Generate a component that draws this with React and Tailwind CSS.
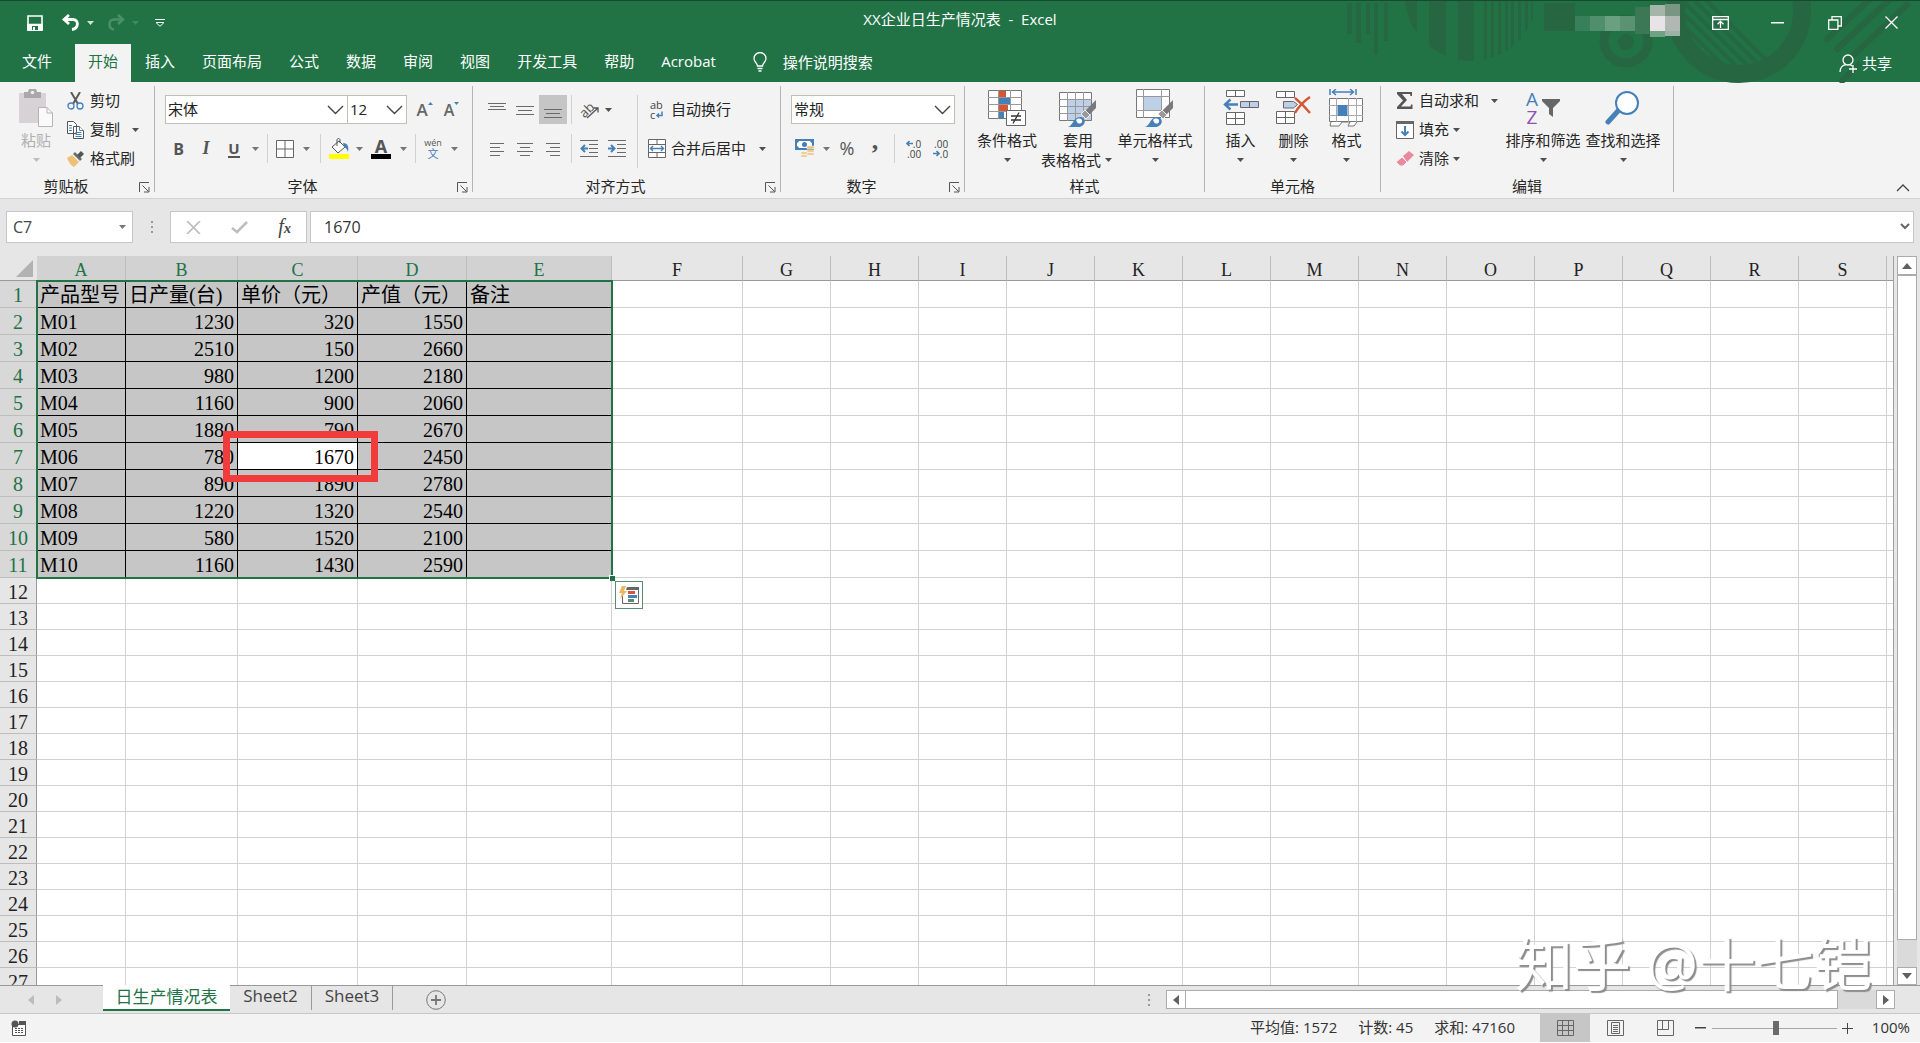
import React from 'react';

const products = [
  ['M01', 1230, 320, 1550],
  ['M02', 2510, 150, 2660],
  ['M03', 980, 1200, 2180],
  ['M04', 1160, 900, 2060],
  ['M05', 1880, 790, 2670],
  ['M06', 780, 1670, 2450],
  ['M07', 890, 1890, 2780],
  ['M08', 1220, 1320, 2540],
  ['M09', 580, 1520, 2100],
  ['M10', 1160, 1430, 2590]
];
const headings = ['产品型号', '日产量(台)', '单价（元）', '产值（元）', '备注'];
const columns = 'ABCDEFGHIJKLMNOPQRS'.split('');
const columnWidths = { A: 'w-[89px]', B: 'w-[112px]', C: 'w-[120px]', D: 'w-[109px]', E: 'w-[145px]', F: 'w-[131px]' };
const emptyRows = Array.from({ length: 16 }, (_, i) => i + 12);
const tabs = ['插入', '页面布局', '公式', '数据', '审阅', '视图', '开发工具', '帮助', 'Acrobat'];

const Caret = ({ className = 'w-[14px]' }) => (
  <span className={`flex shrink-0 justify-center ${className}`}>
    <svg width="7" height="4" viewBox="0 0 7 4"><path d="M0 0h7L3.5 4z" fill="currentColor" opacity=".8" /></svg>
  </span>
);

const Sep = () => (
  <span className="flex h-[29px] w-[11px] shrink-0 justify-center">
    <span className="w-px bg-[#d0d0d0]"></span>
  </span>
);

const Btn = ({ label, className = 'w-[28px]', children }) => (
  <button type="button" aria-label={label} className={`flex h-[29px] shrink-0 items-center justify-center ${className}`}>
    {children}
  </button>
);

const Lines = ({ rows }) => (
  <svg width="18" height="18" viewBox="0 0 18 18" stroke="#6a6a6a" strokeWidth="1">
    {rows.map(([x1, x2, y]) => <path key={y} d={`M${x1} ${y + 0.5}H${x2}`} />)}
  </svg>
);

const Group = ({ label, launcher, className, inner = '', children }) => (
  <section aria-label={label} className={`flex shrink-0 flex-col justify-between border-r border-[#b4b4b4] ${className}`}>
    <div className={`flex ${inner}`}>{children}</div>
    <div className={`relative flex h-3 items-center justify-center leading-3 ${launcher ? 'pr-[22px]' : ''}`}>
      {label}
      {launcher && (
        <button type="button" aria-label={`${label}设置`} className="absolute right-1 top-0.5">
          <svg width="11" height="11" viewBox="0 0 11 11" fill="none" stroke="#555">
            <path d="M.5 10V.5H10M3.5 3.5l6 6M10 5v5H5" />
          </svg>
        </button>
      )}
    </div>
  </section>
);

const BigButton = ({ label, label2, className, children }) => (
  <button type="button" className={`flex shrink-0 flex-col items-center whitespace-nowrap leading-5 ${className}`}>
    <span className="flex h-11 items-center">{children}</span>
    <span>{label}</span>
    <span className="flex h-5 items-center">
      {label2}
      <Caret />
    </span>
  </button>
);

const Picker = ({ label, value, className }) => (
  <div className={`relative h-[29px] shrink-0 ${className}`}>
    <select aria-label={label} className="h-full w-full appearance-none border border-[#c0c0b8] bg-white pl-0.5 text-[15px] text-[#222]">
      <option>{value}</option>
    </select>
    <svg className="pointer-events-none absolute right-1 top-2.5" width="17" height="10" viewBox="0 0 17 10" fill="none" stroke="#444" strokeWidth="1.4">
      <path d="M1 1l7.5 7.5L16 1" />
    </svg>
  </div>
);

const Brush = () => (
  <g>
    <path d="M37 11v8l-7 7-4-4z" fill="#7a7a7a" />
    <path d="M26 21l5 5-4 4-5-5z" fill="#9a9a9a" stroke="#f1f1f1" />
    <path d="M9 38c5-1 5-10 12-10 4 0 6 4 4 7-3 4-11 5-16 3z" fill="#4680b8" />
    <path d="M17 31c3-3 7-1 6 2-1 2-4 2-5 0z" fill="#fff" />
  </g>
);

const TitleArt = () => (
  <svg className="pointer-events-none absolute right-0 top-0" width="580" height="82" viewBox="0 0 580 82">
    <defs>
      <clipPath id="disc"><circle cx="131" cy="-6" r="66" /></clipPath>
      <clipPath id="inner"><circle cx="399" cy="10" r="62" /></clipPath>
    </defs>
    <g fill="#266640">
      <path d="M7 2h5v31H7zM16 2h5v40h-5zM26 2h4v31h-4zM34 2h4v52h-4zM44 2h4v38h-4z" />
      <g clipPath="url(#disc)">
        <path d="M64 0h13v40H64zM89 0h17v60H89zM118 0h16v62h-16zM144 0h3v62h-3zM151 0h3v62h-3zM158 0h3v62h-3zM165 0h3v62h-3zM171 0h3v50h-3zM178 0h3v50h-3zM185 0h3v50h-3zM191 0h2v50h-2z" />
      </g>
      <circle cx="286" cy="41" r="8" />
      <path d="M204 2h31v28h-31z" />
    </g>
    <g fill="none" stroke="#266640">
      <circle cx="286" cy="40" r="22" strokeWidth="9" />
      <circle cx="399" cy="10" r="63" strokeWidth="18" />
      <g clipPath="url(#inner)" strokeWidth="4">
        <path d="M350-5l80 80M362-5l80 80M338-5l80 80M326-5l80 80M314-5l80 80" />
      </g>
      <path d="M485 40l45-42M495 50l55-52M505 62l64-60M500 82l20-20" strokeWidth="6" />
    </g>
    <g>
      <path d="M235 15h15v15h-15z" fill="#37805a" />
      <path d="M250 15h15v15h-15z" fill="#4f8f6b" />
      <path d="M265 15h15v15h-15z" fill="#6a9f80" />
      <path d="M280 15h15v15h-15z" fill="#5b9272" />
      <path d="M295 6h15v27h-15z" fill="#3c7853" />
      <path d="M310 4h15v11h-15z" fill="#a5b5a9" />
      <path d="M325 3h15v12h-15z" fill="#789682" />
      <path d="M310 15h15v15h-15z" fill="#e7e3e6" />
      <path d="M325 15h15v15h-15z" fill="#b0b8b4" />
      <path d="M310 30h15v6h-15z" fill="#70a184" />
      <path d="M325 30h15v5h-15z" fill="#9db1a4" />
    </g>
  </svg>
);

const TitleBar = () => (
  <header className="relative shrink-0 border-t border-[#17492e] bg-[#217346] text-white">
    <TitleArt />
    <div className="relative grid h-[43px] grid-cols-[1fr_auto_1fr] items-center">
      <div className="flex items-center pl-[27px]">
        <button type="button" aria-label="保存">
          <svg width="16" height="16" viewBox="0 0 16 16" fill="none" stroke="#fff" strokeWidth="1.6">
            <path d="M1 1h14v14H1z" /><path d="M1 9.5h14V15H1z" fill="#fff" /><path d="M5 11h6v4H5z" fill="#217346" stroke="none" /><path d="M6 12h2v3H6z" fill="#fff" stroke="none" />
          </svg>
        </button>
        <button type="button" aria-label="撤消" className="ml-[19px] flex items-center">
          <svg width="18" height="17" viewBox="0 0 18 17" fill="none" stroke="#fff" strokeWidth="2.8">
            <path d="M7 1L2 5.5 7 10M2.5 5.5H11c6 0 6 9-1 10" />
          </svg>
          <Caret className="w-[20px]" />
        </button>
        <button type="button" aria-label="恢复" className="ml-[7px] flex items-center text-[#4b9068]">
          <svg width="18" height="17" viewBox="0 0 18 17" fill="none" stroke="currentColor" strokeWidth="2.5">
            <path d="M11 1l5 4.5-5 4.5M15.5 5.5H7c-6 0-6 9 0 10" />
          </svg>
          <Caret className="w-[20px]" />
        </button>
        <button type="button" aria-label="自定义快速访问工具栏" className="ml-[10px]">
          <svg width="10" height="8" viewBox="0 0 10 8" fill="none" stroke="#fff"><path d="M0 .5h10M1 3.5h8L5 7.3z" /></svg>
        </button>
      </div>
      <h1 className="whitespace-pre pb-1.5 text-[15px]">XX企业日生产情况表  -  Excel</h1>
      <div className="flex justify-end">
        <button type="button" aria-label="功能区显示选项" className="flex w-[57px] justify-center">
          <svg width="17" height="14" viewBox="0 0 17 14" fill="none" stroke="#fff" strokeWidth="1.3"><path d="M.7.7h15.6v12.6H.7zM.7 3.5h15.6M8.5 12V5.5M5.5 8.3l3-3 3 3" /></svg>
        </button>
        <button type="button" aria-label="最小化" className="flex w-[57px] items-center justify-center">
          <svg width="13" height="2" viewBox="0 0 13 2"><path d="M0 0h13v1.5H0z" fill="#fff" /></svg>
        </button>
        <button type="button" aria-label="还原" className="flex w-[57px] justify-center">
          <svg width="14" height="14" viewBox="0 0 14 14" fill="none" stroke="#fff" strokeWidth="1.3"><path d="M.7 4h9.2v9.3H.7zM4 4V.7h9.3V10H10" /></svg>
        </button>
        <button type="button" aria-label="关闭" className="flex w-[57px] justify-center">
          <svg width="13" height="13" viewBox="0 0 13 13" stroke="#fff" strokeWidth="1.3"><path d="M.5.5l12 12M12.5.5l-12 12" /></svg>
        </button>
      </div>
    </div>
    <nav className="relative flex h-[38px] items-stretch gap-px pl-[9px] text-[15px]">
      <button type="button" className="px-[13px] pb-1">文件</button>
      <button type="button" className="ml-[9px] bg-[#f3f3f3] px-[13px] pb-1 text-[#217346]">开始</button>
      {tabs.map((tab) => (
        <button key={tab} type="button" className="px-[13px] pb-1">{tab}</button>
      ))}
      <button type="button" className="ml-[23px] flex items-center gap-4 pb-0.5">
        <svg width="14" height="20" viewBox="0 0 14 20" fill="none" stroke="#fff" strokeWidth="1.3">
          <path d="M4.5 14c0-3-3.5-4-3.5-7.5a6 6 0 0112 0C13 10 9.500 11 9.500 14zM4.500 16.500h5M5.500 19h3" />
        </svg>
        操作说明搜索
      </button>
      <button type="button" className="ml-auto mr-[28px] flex items-center gap-1">
        <svg width="19" height="19" viewBox="0 0 19 19" fill="none" stroke="#fff" strokeWidth="1.3">
          <circle cx="9" cy="6" r="5" /><path d="M1 18c0-4 2.5-7 6-7.5M11 10.5l2 1.5M14 11v8M10 15h8" />
        </svg>
        共享
      </button>
    </nav>
  </header>
);

const Clipboard = () => (
  <Group label="剪贴板" launcher className="w-[155px]">
    <div className="text-[#b0b0b0]">
      <BigButton label="粘贴" className="ml-[9px] w-[54px]">
        <svg width="34" height="38" viewBox="0 0 34 38">
          <path d="M0 4h27v30H0z" fill="#d6d2d6" /><path d="M5 3h4a4.500 4.500 0 019 0h4v6H5z" fill="#a9a9a9" /><circle cx="13.5" cy="3.5" r="1.7" fill="#f3f3f3" />
          <path d="M19.5 18.5h8.5l5.5 5.5v13.5h-14z" fill="#fafafa" stroke="#b5b5b5" /><path d="M28 18.5V24h5.5" fill="none" stroke="#b5b5b5" />
        </svg>
      </BigButton>
    </div>
    <div className="flex flex-col">
      <button type="button" className="flex h-[29px] items-center gap-[6px] pl-1">
        <svg width="17" height="18" viewBox="0 0 17 18" fill="none">
          <path d="M4 0l7 12M13 0L6 12" stroke="#5a5a5a" strokeWidth="2" /><circle cx="4" cy="14" r="3" stroke="#4680b8" strokeWidth="1.3" /><circle cx="13" cy="14" r="3" stroke="#4680b8" strokeWidth="1.3" />
        </svg>
        剪切
      </button>
      <button type="button" className="flex h-[29px] items-center gap-[6px] pl-1">
        <svg width="17" height="18" viewBox="0 0 17 18" fill="#fff" stroke="#555">
          <path d="M.5.5h6l3 3v9h-9zM6.500 5.500h6l4 4v8h-10z" /><path d="M2 4.500h3M2 7h3M2 9.500h3M12.500 5.500v4h4M8.500 11.500h6M8.500 13.500h6M8.500 15.500h6" stroke="#4680b8" />
        </svg>
        复制
        <Caret className="ml-0.5 w-[14px]" />
      </button>
      <button type="button" className="flex h-[29px] items-center gap-[6px] pl-1">
        <svg width="17" height="16" viewBox="0 0 17 16">
          <path d="M0 7l5-3 7 7-5 5c-2-1-4-2-7-9z" fill="#edc274" /><path d="M6 3l2-2 7 7-2 2z" fill="#6d6d6d" /><path d="M10 4l4-4 3 3-4 4z" fill="#555" />
        </svg>
        格式刷
      </button>
    </div>
  </Group>
);

const FontGroup = () => (
  <Group label="字体" launcher className="w-[318px]" inner="pl-[10px]">
    <div className="flex flex-col gap-[10px] pt-[9px]">
      <div className="flex">
        <Picker label="字体" value="宋体" className="w-[183px]" />
        <Picker label="字号" value="12" className="-ml-px w-[60px]" />
        <Btn label="增大字号" className="ml-1 w-[27px]"><span className="text-[17px] font-semibold text-[#666]">A</span><svg className="mb-3" width="5" height="3"><path d="M0 3h5L2.5 0z" fill="#4680b8" /></svg></Btn>
        <Btn label="减小字号" className="w-[27px]"><span className="text-[16px] font-semibold text-[#666]">A</span><svg className="mb-3" width="5" height="3"><path d="M0 0h5L2.5 3z" fill="#4680b8" /></svg></Btn>
      </div>
      <div className="flex items-center text-[#555]">
        <Btn label="加粗" className="w-[27px]"><b className="text-[16px]">B</b></Btn>
        <Btn label="倾斜"><b className="font-['Liberation_Serif',serif] text-[18px] italic">I</b></Btn>
        <Btn label="下划线"><b className="border-b-2 border-[#555] text-[15px] leading-4">U</b></Btn>
        <Caret />
        <Sep />
        <Btn label="边框" className="w-6">
          <svg width="18" height="18" viewBox="0 0 18 18" fill="#fff" stroke="#666"><path d="M.5.5h17v17H.5zM9 .5v17M.5 9h17" /></svg>
        </Btn>
        <Caret className="w-[18px]" />
        <Sep />
        <Btn label="填充颜色" className="w-[26px]">
          <svg width="20" height="21" viewBox="0 0 20 21">
            <path d="M3 9l7-6 6 6-7 6z" fill="#fff" stroke="#555" /><path d="M8 8V2c0-2 3-2 3 0v3" fill="none" stroke="#555" /><path d="M14 5c5 0 6 4 5 9-1-3-2-4-4-5z" fill="#4680b8" /><path d="M0 16h20v5H0z" fill="#ff0" />
          </svg>
        </Btn>
        <Caret />
        <Btn label="字体颜色" className="w-[30px]">
          <span className="flex flex-col items-center"><b className="text-[18px] leading-4">A</b><span className="h-[5px] w-5 bg-black"></span></span>
        </Btn>
        <Caret />
        <Sep />
        <Btn label="拼音指南" className="w-6">
          <span className="flex flex-col items-center"><span className="text-[9px] leading-[10px]">wén</span><span className="text-[11px] leading-3 text-[#4680b8]">文</span></span>
        </Btn>
        <Caret className="w-[18px]" />
      </div>
    </div>
  </Group>
);

const Indent = ({ label, out }) => (
  <Btn label={label}>
    <svg width="18" height="17" viewBox="0 0 18 17" fill="none" stroke="#6a6a6a">
      <path d="M0 .5h18M9 4.500h9M9 8.500h9M9 12.500h9M0 16.500h18" />
      <path d={out ? 'M8 8.500H2M5 5L1.500 8.500 5 12' : 'M0 8.500h6M3 5l3.500 3.500L3 12'} stroke="#4680b8" strokeWidth="2" />
    </svg>
  </Btn>
);

const AlignGroup = () => (
  <Group label="对齐方式" launcher className="w-[308px]" inner="pl-[10px]">
    <div className="flex flex-col gap-[10px] pt-[9px]">
      <div className="flex items-center">
        <Btn label="顶端对齐"><Lines rows={[[0, 18, 2], [2, 16, 5], [0, 18, 8]]} /></Btn>
        <Btn label="垂直居中"><Lines rows={[[0, 18, 5], [2, 16, 9], [0, 18, 13]]} /></Btn>
        <Btn label="底端对齐" className="w-[28px] bg-[#c5c5c5]"><Lines rows={[[0, 18, 8], [2, 16, 12], [0, 18, 16]]} /></Btn>
        <span className="flex h-[29px] w-2 shrink-0 justify-center"><span className="w-px bg-[#d0d0d0]"></span></span>
        <Btn label="方向">
          <svg className="overflow-visible" width="19" height="18" viewBox="0 0 19 18">
            <text x="-1" y="14" fontSize="13" fill="#555" transform="rotate(-45 6 9)">ab</text>
            <path d="M7 17L18 7M13.5 7H18v4.5" fill="none" stroke="#555" strokeWidth="1.3" />
          </svg>
        </Btn>
        <Caret className="w-[10px]" />
      </div>
      <div className="flex items-center">
        <Btn label="左对齐"><Lines rows={[[2, 16, 3], [2, 12, 7], [2, 16, 11], [2, 12, 15]]} /></Btn>
        <Btn label="居中"><Lines rows={[[1, 17, 3], [4, 14, 7], [1, 17, 11], [4, 14, 15]]} /></Btn>
        <Btn label="右对齐"><Lines rows={[[2, 16, 3], [6, 16, 7], [2, 16, 11], [6, 16, 15]]} /></Btn>
        <span className="flex h-[29px] w-2 shrink-0 justify-center"><span className="w-px bg-[#d0d0d0]"></span></span>
        <Indent label="减少缩进量" out />
        <Indent label="增加缩进量" />
      </div>
    </div>
    <span className="ml-[6px] mt-[9px] h-[73px] w-px bg-[#d0d0d0]"></span>
    <div className="flex flex-col gap-[10px] pl-[10px] pt-[9px]">
      <button type="button" className="flex h-[29px] items-center gap-[5px]">
        <span className="flex w-[18px] flex-col items-start pl-0.5 text-[11px] leading-[10px] text-[#444]">
          <span>ab</span>
          <span className="flex">c<svg width="8" height="9" viewBox="0 0 8 8" fill="none" stroke="#4680b8" strokeWidth="1.5"><path d="M7 1v4H2M4 3L2 5l2 2" /></svg></span>
        </span>
        自动换行
      </button>
      <button type="button" className="flex h-[29px] items-center gap-[5px]">
        <svg width="18" height="19" viewBox="0 0 18 19" fill="#fff" stroke="#666">
          <path d="M.5.5h17v18H.5zM.5 5.500h17M.5 13.500h17M9 .5v5M9 13.500v5" /><path d="M3 9.500h12M5 7L2.500 9.500 5 12M13 7l2.500 2.500L13 12" fill="none" stroke="#4680b8" strokeWidth="1.4" />
        </svg>
        合并后居中
        <Caret className="ml-1 w-[14px]" />
      </button>
    </div>
  </Group>
);

const Arrow = ({ right }) => (
  <svg width="7" height="7" viewBox="0 0 7 7" fill="none" stroke="#4680b8" strokeWidth="1.6">
    <path d={right ? 'M0 3.500h6M3.500 1L6 3.500 3.500 6' : 'M7 3.500H1M3.500 1L1 3.500 3.500 6'} />
  </svg>
);

const Decimal = ({ label, top, bottom, flip }) => (
  <Btn label={label} className="w-[27px]">
    <span className="flex flex-col items-end text-[10px] leading-[10px] text-[#444]">
      <span className="flex items-center">{!flip && <Arrow />}{top}</span>
      <span className="flex items-center">{flip && <Arrow right />}{bottom}</span>
    </span>
  </Btn>
);

const NumberGroup = () => (
  <Group label="数字" launcher className="w-[184px]" inner="pl-[10px]">
    <div className="flex flex-col gap-[10px] pt-[9px]">
      <Picker label="数字格式" value="常规" className="w-[164px]" />
      <div className="flex items-center text-[#555]">
        <Btn label="会计数字格式">
          <svg width="20" height="20" viewBox="0 0 20 20">
            <path d="M0 0h19v11H0z" fill="#4680b8" /><path d="M2 4a3 3 0 002-2h11a3 3 0 002 2v3a3 3 0 00-2 2H4a3 3 0 00-2-2z" fill="#fff" /><circle cx="9.5" cy="5.5" r="2.5" fill="#4680b8" />
            <path d="M12 7h7v3h-7zM12 11h7v2h-7zM12 14h7v2h-7zM6 13h6v2H6zM6 16h6v2H6z" fill="#edc274" stroke="#f3f3f3" strokeWidth=".5" />
          </svg>
        </Btn>
        <Caret />
        <Btn label="百分比样式"><span className="text-[18px]">%</span></Btn>
        <Btn label="千位分隔样式"><b className="pb-4 font-['Liberation_Serif',serif] text-[26px] leading-5">,</b></Btn>
        <Sep />
        <Decimal label="增加小数位数" top=".0" bottom=".00" />
        <Decimal label="减少小数位数" top=".00" bottom=".0" flip />
      </div>
    </div>
  </Group>
);

const StyleGroup = () => (
  <Group label="样式" className="w-[240px]" inner="gap-px pl-[10px]">
    <BigButton label="条件格式" className="w-16">
      <svg width="38" height="36" viewBox="0 0 38 36">
        <path d="M.5.5h33v28H.5z" fill="#fff" stroke="#777" /><path d="M0 7.500h34M0 14.500h34M0 21.500h34M10.500 0v29M22.500 0v29" stroke="#999" />
        <path d="M11 1h7v6h-7zM11 15h9v6h-9z" fill="#d65532" /><path d="M11 8h11v6H11zM11 22h5v6h-5z" fill="#4680b8" />
        <path d="M18.5 20.5h19v15h-19z" fill="#fff" stroke="#666" /><path d="M23 26h10M23 30h10M31 22.500l-6 11" stroke="#333" strokeWidth="1.3" />
      </svg>
    </BigButton>
    <BigButton label="套用" label2="表格格式" className="w-[76px]">
      <svg width="38" height="38" viewBox="0 0 38 38">
        <path d="M.5 3.500h32v28H.5z" fill="#fff" stroke="#777" /><path d="M9 10h23v21H9z" fill="#bdd0e8" /><path d="M0 10.500h33M0 17.500h33M0 24.500h33M8.500 3v29M16.500 3v29M24.500 3v29" stroke="#999" />
        <Brush />
      </svg>
    </BigButton>
    <BigButton label="单元格样式" className="w-[76px]">
      <svg width="38" height="38" viewBox="0 0 38 38">
        <path d="M.5.5h33v28H.5z" fill="#fff" stroke="#777" /><path d="M8 8h18v13H8z" fill="#bdd0e8" /><path d="M0 7.500h34M0 21.500h34M7.500 0v29M25.500 0v29" stroke="#999" />
        <Brush />
      </svg>
    </BigButton>
  </Group>
);

const CellGroup = () => (
  <Group label="单元格" className="w-[176px]" inner="pl-[9px]">
    <BigButton label="插入" className="w-[53px]">
      <svg width="36" height="36" viewBox="0 0 36 36" fill="#fff" stroke="#666">
        <path d="M3.500.5h18v6h-18zM12.500.5v6M3.500 22.500h18v12h-18zM3.500 28.500h18M12.500 22.500v12" /><path d="M17.500 11.500h18v6h-18zM26.500 11.500v6" fill="#bdd0e8" />
        <path d="M15 14.500H2M7.500 9.500l-5.500 5 5.500 5" fill="none" stroke="#4680b8" strokeWidth="2.4" />
      </svg>
    </BigButton>
    <BigButton label="删除" className="w-[53px]">
      <svg width="36" height="36" viewBox="0 0 36 36" fill="#fff" stroke="#666">
        <path d="M.5 1.500h18v6H.5zM9.500 1.500v6M.5 21.500h18v12H.5zM.5 27.500h18M9.500 21.500v12" /><path d="M7.500 11.500h10l4 3-4 3.500h-10z" fill="#bdd0e8" />
        <path d="M19 8c5 4 10 9 15 15M34 7c-6 4-11 9-15 16" fill="none" stroke="#d65532" strokeWidth="2.4" />
      </svg>
    </BigButton>
    <BigButton label="格式" className="w-[53px]">
      <svg width="35" height="38" viewBox="0 0 35 38" fill="#fff" stroke="#777">
        <path d="M.5 9.500h33v23H.5zM2 33l-1 4h9l3-4h8l-2 4h6l3-4" /><path d="M0 16.500h34M0 26.500h34M7.500 9v24M19.500 9v24M27.500 9v24" stroke="#aaa" />
        <path d="M8.500 16h10v11h-10z" fill="#4680b8" stroke="none" /><path d="M1 0v6M27 0v6M4 3h20M7 0L3.500 3 7 6M21 0l3.500 3L21 6" fill="none" stroke="#4680b8" strokeWidth="1.5" />
      </svg>
    </BigButton>
  </Group>
);

const EditGroup = () => (
  <Group label="编辑" className="w-[293px]" inner="pl-[14px]">
    <div className="flex w-[110px] flex-col">
      <button type="button" className="flex h-[29px] items-center">
        <svg className="mr-1 w-5" width="16" height="17" viewBox="0 0 16 17"><path d="M0 0h15v4h-1.5L13 2H5l5 6-6 6.500h9.500l.5-2h1.500V17H0v-2l6-6.500L0 2z" fill="#555" /></svg>
        自动求和
        <Caret className="ml-2 w-[14px]" />
      </button>
      <button type="button" className="flex h-[29px] items-center">
        <svg className="mr-1 w-5" width="18" height="18" viewBox="0 0 18 18" fill="#fff"><path d="M.5.5h17v17H.5z" stroke="#666" /><path d="M0 0h18v3H0z" fill="#666" /><path d="M9 5v9M5.500 10.500L9 14l3.500-3.500" fill="none" stroke="#4680b8" strokeWidth="2" /></svg>
        填充
        <Caret />
      </button>
      <button type="button" className="flex h-[29px] items-center">
        <svg className="mr-1 w-5" width="18" height="16" viewBox="0 0 18 16"><path d="M7 5l6-5 5 4-7 7z" fill="#e8899c" /><path d="M6 6l5 5-4 4H4l-4-4z" fill="#e8899c" stroke="#f3f3f3" /></svg>
        清除
        <Caret />
      </button>
    </div>
    <div className="flex gap-1">
      <BigButton label="排序和筛选" className="w-[76px]">
        <span className="flex items-center">
          <span className="flex flex-col text-[19px] leading-[18px]"><span className="text-[#4680b8]">A</span><span className="text-[#8b54b0]">Z</span></span>
          <svg className="ml-1" width="18" height="18" viewBox="0 0 18 18"><path d="M0 0h18v2l-7 7v9l-4-3V9L0 2z" fill="#666" /></svg>
        </span>
      </BigButton>
      <BigButton label="查找和选择" className="w-[76px]">
        <svg width="36" height="34" viewBox="0 0 36 34" fill="none" stroke="#4680b8"><path d="M13 20L3 31" strokeWidth="5" strokeLinecap="round" /><circle cx="22" cy="12" r="11" fill="#fdfeff" strokeWidth="2" /></svg>
      </BigButton>
    </div>
  </Group>
);

const FormulaBar = () => (
  <div className="flex h-[57px] shrink-0 items-start px-[6px] pt-3">
    <div className="relative h-8 w-[127px]">
      <input aria-label="名称框" defaultValue="C7" className="h-full w-full border border-[#c6c6c6] bg-white pl-[6px] text-[16px] text-[#444]" />
      <span className="pointer-events-none absolute right-1 top-3.5 text-[#555]"><Caret /></span>
    </div>
    <div className="flex h-8 w-[37px] flex-col items-center justify-center gap-[3px]">
      <span className="size-0.5 bg-[#999]"></span><span className="size-0.5 bg-[#999]"></span><span className="size-0.5 bg-[#999]"></span>
    </div>
    <div className="flex h-8 w-[137px] items-center justify-around border border-[#c6c6c6] bg-white">
      <button type="button" aria-label="取消"><svg width="15" height="13" viewBox="0 0 15 13" stroke="#bdbdbd" strokeWidth="1.7"><path d="M1 0l13 13M14 0L1 13" /></svg></button>
      <button type="button" aria-label="输入"><svg width="17" height="13" viewBox="0 0 17 13" fill="none" stroke="#bdbdbd" strokeWidth="2.6"><path d="M1 7l5 4L16 1" /></svg></button>
      <button type="button" aria-label="插入函数" className="font-['Liberation_Serif',serif] text-[20px] italic leading-5 text-[#444]">f<b className="text-[14px]">x</b></button>
    </div>
    <div className="relative ml-[3px] h-8 flex-1">
      <input aria-label="编辑栏" defaultValue="1670" className="h-full w-full border border-[#c6c6c6] bg-white pl-[13px] text-[16px] text-[#333]" />
      <svg className="absolute right-1 top-3" width="10" height="7" viewBox="0 0 10 7" fill="none" stroke="#666" strokeWidth="2"><path d="M1 1l4 4 4-4" /></svg>
    </div>
  </div>
);

const RowHead = ({ n, selected }) => (
  <th scope="row" className={`border-b border-r border-[#bdbdbd] p-0 font-normal ${selected ? 'bg-[#d8d8d8] pt-0.5 leading-[23px] text-[#217346]' : 'border-r-[#9a9a9a] bg-[#e6e6e6] pt-1 leading-[21px] text-[#222]'}`}>{n}</th>
);

const Sheet = () => (
  <div className="relative min-w-0 flex-1 overflow-hidden border-r border-[#a0a0a0] bg-white">
    <table className="w-full table-fixed border-separate border-spacing-0 font-['Liberation_Serif','Noto_Sans_CJK_SC',serif] text-[20px] leading-6 text-black">
      <colgroup>
        <col className="w-[37px]" />
        {columns.map((c) => <col key={c} className={columnWidths[c] || 'w-[88px]'} />)}
        <col />
      </colgroup>
      <thead>
        <tr className="h-[25px] text-[18px] leading-5">
          <th aria-label="全选" className="border-b border-[#9a9a9a] bg-[#e6e6e6] p-0">
            <svg className="ml-4" width="17" height="17" viewBox="0 0 17 17"><path d="M17 0v17H0z" fill="#b2b2b2" /></svg>
          </th>
          {columns.map((c, i) => (
            <th key={c} scope="col" className={`border-b border-r border-r-[#bdbdbd] border-b-[#9a9a9a] p-0 pt-1 font-normal ${i < 5 ? 'bg-[#d2d2d2] text-[#217346]' : 'bg-[#e6e6e6] text-[#222]'}`}>{c}</th>
          ))}
          <th className="border-b border-[#9a9a9a] bg-[#e6e6e6] p-0"></th>
        </tr>
      </thead>
      <tbody>
        <tr className="h-[27px]">
          <RowHead n={1} selected />
          {headings.map((h) => (
            <td key={h} className="whitespace-nowrap border-b border-r border-black bg-[#c6c6c6] p-0 pl-[3px] pt-0.5">{h}</td>
          ))}
          {columns.slice(5).map((c) => <td key={c} className="border-b border-r border-[#d2d2d2] p-0"></td>)}
          <td className="border-b border-[#d2d2d2] p-0"></td>
        </tr>
        {products.map(([name, ...values], r) => (
          <tr key={name} className="h-[27px]">
            <RowHead n={r + 2} selected />
            <td className="border-b border-r border-black bg-[#c6c6c6] p-0 pl-[3px] pt-0.5">{name}</td>
            {values.map((v, i) => (
              <td key={i} className={`border-b border-r border-black p-0 pr-[3px] pt-0.5 text-right ${r === 5 && i === 1 ? 'bg-white' : 'bg-[#c6c6c6]'}`}>{v}</td>
            ))}
            <td className="border-b border-r border-black bg-[#c6c6c6] p-0"></td>
            {columns.slice(5).map((c) => <td key={c} className="border-b border-r border-[#d2d2d2] p-0"></td>)}
            <td className="border-b border-[#d2d2d2] p-0"></td>
          </tr>
        ))}
        {emptyRows.map((n) => (
          <tr key={n} className="h-[26px]">
            <RowHead n={n} />
            {columns.map((c) => <td key={c} className="border-b border-r border-[#d2d2d2] p-0"></td>)}
            <td className="border-b border-[#d2d2d2] p-0"></td>
          </tr>
        ))}
      </tbody>
    </table>

    {/* selection frame, fill handle, highlight and quick analysis button float over the cells */}
    <div className="pointer-events-none absolute left-[36px] top-[24px] h-[299px] w-[577px] border-2 border-[#217346]"></div>
    <div className="absolute left-[609px] top-[319px] size-[6px] border-l border-t border-white bg-[#217346]"></div>
    <div className="pointer-events-none absolute left-[223px] top-[175px] h-[51px] w-[155px] border-[7px] border-[#f23c3c]"></div>
    <button type="button" aria-label="快速分析" className="absolute left-[615px] top-[325px] flex size-7 items-center justify-center border border-[#5d8a72] bg-white">
      <svg width="20" height="19" viewBox="0 0 20 19">
        <path d="M8 1.500h11.500v16H3.500V10" fill="none" stroke="#666" /><path d="M8 1h12v3H7z" fill="#666" />
        <path d="M9 5h7v3H9z" fill="#d65532" /><path d="M9 9h9v3H9z" fill="#4680b8" /><path d="M9 13h6v3H9z" fill="#5d8a72" /><path d="M3 0h4L5 5h3L1 13l2-6H0z" fill="#edb65c" />
      </svg>
    </button>
  </div>
);

const VerticalScroll = () => (
  <div className="mx-[3px] flex w-5 shrink-0 flex-col">
    <button type="button" aria-label="向上滚动" className="flex h-[19px] items-center justify-center border border-[#ababab] bg-white">
      <svg width="10" height="6"><path d="M0 6h10L5 0z" fill="#606060" /></svg>
    </button>
    <div className="flex flex-1 flex-col bg-[#dadada]">
      <div className="mb-[27px] flex-1 border border-[#ababab] bg-white"></div>
    </div>
    <button type="button" aria-label="向下滚动" className="flex h-[18px] items-center justify-center border border-[#ababab] bg-white">
      <svg width="10" height="6"><path d="M0 0h10L5 6z" fill="#606060" /></svg>
    </button>
  </div>
);

const SheetTabs = () => (
  <div className="flex h-[29px] shrink-0 items-start border-b border-t border-b-[#c6c6c6] border-t-[#999] bg-[#e6e6e6] text-[17px] leading-5 text-[#444]">
    <button type="button" aria-label="上一个工作表" className="ml-[28px] mt-[9px]"><svg width="6" height="10"><path d="M6 0v10L0 5z" fill="#bbb" /></svg></button>
    <button type="button" aria-label="下一个工作表" className="ml-[22px] mt-[9px]"><svg width="6" height="10"><path d="M0 0v10l6-5z" fill="#bbb" /></svg></button>
    <button type="button" className="-mt-px ml-[41px] h-[26px] w-[127px] border-b-2 border-[#217346] bg-white text-[#217346]">日生产情况表</button>
    <div className="flex h-[24px] w-[82px] items-start justify-center border-r border-[#999]"><button type="button">Sheet2</button></div>
    <div className="flex h-[24px] w-[81px] items-start justify-center border-r border-[#999]"><button type="button">Sheet3</button></div>
    <button type="button" aria-label="新工作表" className="ml-[33px] mt-1">
      <svg width="20" height="20" viewBox="0 0 20 20" fill="none" stroke="#777"><circle cx="10" cy="10" r="9.3" /><path d="M5 10h10M10 5v10" strokeWidth="1.8" /></svg>
    </button>
    <div className="ml-auto mr-[25px] mt-1 flex h-[19px] w-[747px]">
      <span className="flex w-[18px] shrink-0 flex-col justify-center gap-[3px]">
        <span className="size-0.5 bg-[#999]"></span><span className="size-0.5 bg-[#999]"></span><span className="size-0.5 bg-[#999]"></span>
      </span>
      <button type="button" aria-label="向左滚动" className="flex w-5 items-center justify-center border border-[#ababab] bg-white"><svg width="6" height="10"><path d="M6 0v10L0 5z" fill="#606060" /></svg></button>
      <div className="flex flex-1 bg-[#dadada]"><div className="mr-[38px] flex-1 border border-l-0 border-[#ababab] bg-white"></div></div>
      <button type="button" aria-label="向右滚动" className="flex w-[19px] items-center justify-center border border-[#ababab] bg-white"><svg width="6" height="10"><path d="M0 0v10l6-5z" fill="#606060" /></svg></button>
    </div>
  </div>
);

const StatusBar = () => (
  <footer className="flex h-[28px] shrink-0 items-stretch bg-[#f3f3f3] pr-[10px] text-[15px] leading-[26px] text-[#333]">
    <button type="button" aria-label="录制宏" className="ml-[11px]">
      <svg width="16" height="16" viewBox="0 0 16 16"><path d="M1.5 4.500h13v11h-13z" fill="#fff" stroke="#555" /><path d="M8 1h7v4H8z" fill="#555" /><circle cx="4" cy="4" r="3.5" fill="#555" /><path d="M4 8.500h8M4 10.500h8M4 12.500h8" stroke="#555" strokeDasharray="2 1" /></svg>
    </button>
    <div className="ml-auto mr-[25px] flex gap-[21px]">
      <span>平均值: 1572</span>
      <span>计数: 45</span>
      <span>求和: 47160</span>
    </div>
    <button type="button" aria-label="普通" className="flex w-[50px] items-center justify-center bg-[#c6c6c6]">
      <svg width="17" height="16" viewBox="0 0 17 16" fill="none" stroke="#666"><path d="M.5.5h16v15H.5zM.5 5.500h16M.5 10.500h16M5.500.5v15M11.500.5v15" /></svg>
    </button>
    <button type="button" aria-label="页面布局" className="flex w-[50px] items-center justify-center">
      <svg width="17" height="16" viewBox="0 0 17 16" fill="none" stroke="#666"><path d="M.5.5h16v15H.5zM4.500 2.500h8v11h-8zM6 5.500h5M6 7.500h5M6 9.500h5M6 11.500h5" /></svg>
    </button>
    <button type="button" aria-label="分页预览" className="flex w-[50px] items-center justify-center">
      <svg width="17" height="16" viewBox="0 0 17 16" fill="none" stroke="#666"><path d="M.5.5h16v15H.5zM.5 9.500h11v-9M5.500.5v9" /></svg>
    </button>
    <button type="button" aria-label="缩小" className="ml-[5px] flex w-3 items-center"><svg width="11" height="2"><path d="M0 0h11v1.500H0z" fill="#444" /></svg></button>
    <input type="range" aria-label="显示比例" min="0" max="200" defaultValue="102" className="mx-[5px] my-auto h-px w-[125px] appearance-none bg-[#a6a6a6] [&::-webkit-slider-thumb]:h-[14px] [&::-webkit-slider-thumb]:w-[6px] [&::-webkit-slider-thumb]:appearance-none [&::-webkit-slider-thumb]:bg-[#6a6a6a]" />
    <button type="button" aria-label="放大" className="flex w-3 items-center"><svg width="11" height="11"><path d="M0 5.500h11M5.500 0v11" stroke="#444" /></svg></button>
    <span className="ml-4 w-10 text-right">100%</span>
  </footer>
);

const App = () => {
  return (
    <div className="relative flex h-screen flex-col overflow-hidden bg-white pb-px font-['Open_Sans','Noto_Sans_CJK_SC',sans-serif]">
      <TitleBar />
      <div className="flex h-[117px] shrink-0 border-b border-[#d2d2d2] bg-[#f3f3f3] pb-[6px] pt-1 text-[15px] text-[#262626]">
        <Clipboard />
        <FontGroup />
        <AlignGroup />
        <NumberGroup />
        <StyleGroup />
        <CellGroup />
        <EditGroup />
        <button type="button" aria-label="折叠功能区" className="ml-auto mr-[10px] mt-auto">
          <svg width="14" height="8" viewBox="0 0 14 8" fill="none" stroke="#444" strokeWidth="1.3"><path d="M1 7l6-6 6 6" /></svg>
        </button>
      </div>
      <main className="flex min-h-0 flex-1 flex-col bg-[#e6e6e6]">
        <FormulaBar />
        <div className="flex min-h-0 flex-1">
          <Sheet />
          <VerticalScroll />
        </div>
      </main>
      <SheetTabs />
      <StatusBar />
      <div className="pointer-events-none absolute bottom-[49px] right-[48px] whitespace-pre text-[58px] leading-[60px] text-white [text-shadow:2px_2px_1px_#8c8c8c]">知乎 @十七铠</div>
    </div>
  );
};

export default App;
